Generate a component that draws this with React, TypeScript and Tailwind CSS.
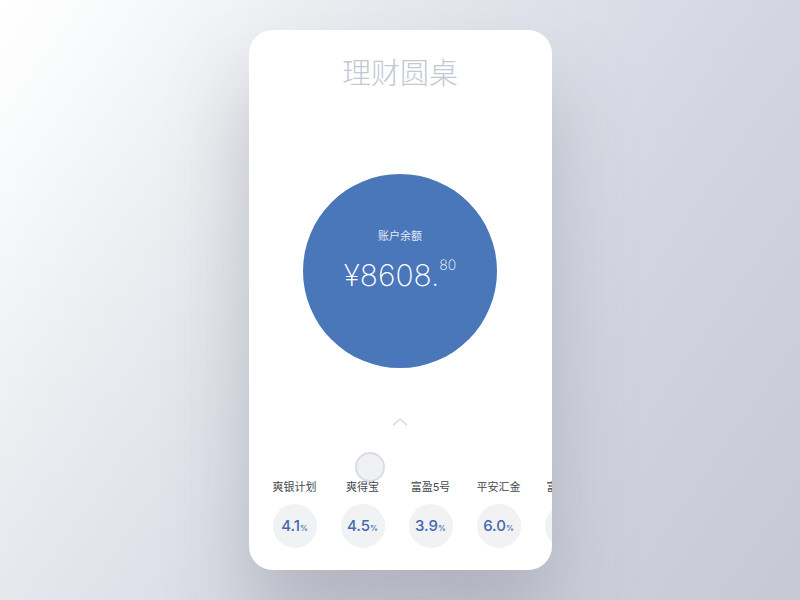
import React from "react";

type Product = { name: string; rate: string };

const products: Product[] = [
  { name: "爽银计划", rate: "4.1" },
  { name: "爽得宝", rate: "4.5" },
  { name: "富盈5号", rate: "3.9" },
  { name: "平安汇金", rate: "6.0" },
  { name: "富盈6号", rate: "5.2" },
];

function Balance() {
  return (
    <section className="flex size-[194px] flex-col items-center rounded-full bg-[#4a76ba] pt-[54px] text-white">
      <h2 className="text-[11px] leading-4 text-[#e3e9f6]">账户余额</h2>
      <p className="mt-[13px] flex items-start font-extralight">
        <span className="text-[30px] leading-9">¥8608.</span>
        <span className="text-[14px] leading-4">80</span>
      </p>
    </section>
  );
}

function ProductItem({ name, rate }: Product) {
  return (
    <li className="flex w-[68px] shrink-0 flex-col items-center gap-[9px]">
      <span className="text-[11px] leading-4 whitespace-nowrap text-[#45474d]">{name}</span>
      <button
        type="button"
        aria-label={`${name} ${rate}%`}
        className="flex size-11 items-baseline justify-center rounded-full bg-[#f1f2f4] text-[#4569ae]"
      >
        <span className="text-[15px] leading-[44px] font-medium">{rate}</span>
        <span className="text-[8px] font-medium">%</span>
      </button>
    </li>
  );
}

export default function App() {
  return (
    <main className="flex min-h-screen items-center justify-center overflow-hidden bg-[linear-gradient(125deg,#ffffff_0%,#f9fafb_10%,#f0f2f4_20%,#e5e8ed_34%,#dbdee7_50%,#d3d6e1_65%,#c6c9d4_100%)] py-[30px] font-['Inter','Noto_Sans_CJK_SC',sans-serif]">
      <div className="w-[303px] rounded-3xl shadow-[0_56px_80px_0_rgba(130,134,142,0.42)]">
        <div className="flex flex-col items-center overflow-hidden rounded-3xl bg-white pt-[26px] pb-[22px]">
          <h1 className="text-[29px] leading-9 font-light text-[#c3c8d5]">理财圆桌</h1>
          <div className="pt-[82px]">
            <Balance />
          </div>
          <button type="button" aria-label="展开" className="mt-[46px] flex h-4 w-8 items-center justify-center">
            <svg width="16" height="8" viewBox="0 0 16 8" fill="none" stroke="#d3d6e0" strokeWidth="1.3">
              <path d="M1 7.2 8 1l7 6.2" />
            </svg>
          </button>
          <div className="relative mt-[49px] w-full">
            <span className="absolute -top-[27px] left-[106px] size-[30px] rounded-full border-2 border-[#d9dce5] bg-[#f0f1f4]" />
            <ul className="relative flex pl-3">
              {products.map((p) => (
                <ProductItem key={p.name} name={p.name} rate={p.rate} />
              ))}
            </ul>
          </div>
        </div>
      </div>
    </main>
  );
}
